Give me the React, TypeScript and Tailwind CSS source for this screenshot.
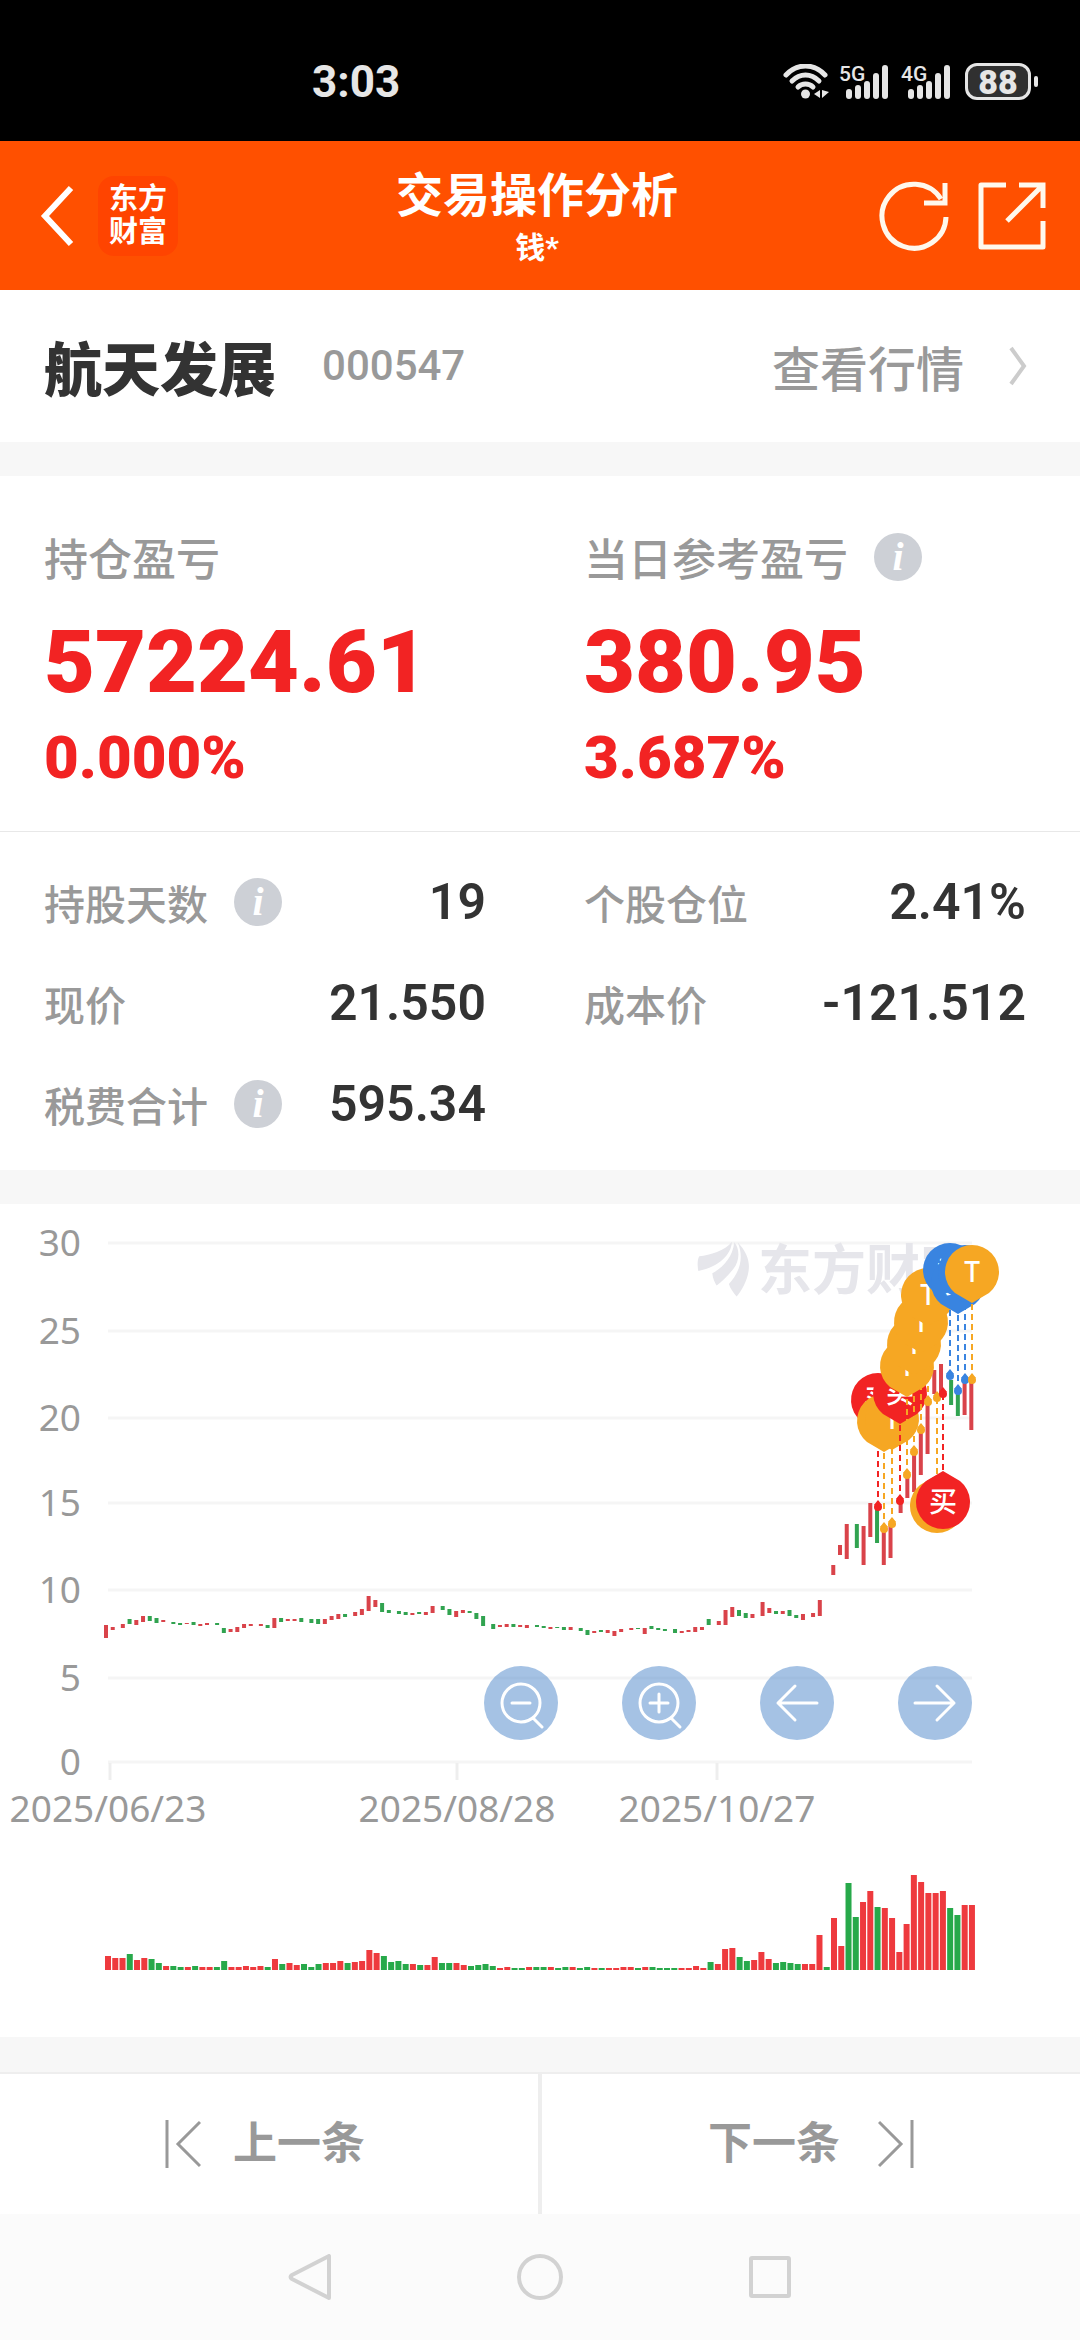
import React from "react";

const candleSpans: ([number, number] | null)[] = [
  [421, 434], [423, 426], [420, 424], [415, 420], [416, 421], [412, 418], [412, 417], [414, 419], [416, 418], [418, 420],
  [419, 421], [419, 420], [418, 421], [420, 422], [419, 421], [419, 421], [424, 429], [425, 428], [423, 428], [420, 424],
  [420, 422], [420, 422], [421, 424], [414, 424], [414, 418], [415, 417], [415, 417], [414, 418], [415, 419], [415, 420],
  [415, 420], [412, 416], [410, 415], [410, 413], [408, 412], [405, 411], [392, 407], [396, 403], [399, 408], [406, 409],
  [407, 410], [408, 411], [409, 411], [408, 410], [408, 411], [402, 409], [402, 406], [405, 411], [407, 413], [406, 409],
  [407, 409], [409, 415], [412, 422], [420, 425], [421, 423], [420, 423], [420, 423], [421, 423], [421, 424], [421, 423],
  [422, 424], [423, 425], [423, 424], [423, 426], [423, 426], [424, 427], [426, 431], [427, 429], [426, 428], [426, 429],
  [427, 432], [425, 428], [424, 426], [424, 425], [424, 430], [422, 425], [424, 426], [425, 427], [425, 429], [427, 429],
  [426, 428], [423, 428], [423, 426], [415, 421], [417, 421], [406, 421], [403, 413], [406, 412], [409, 414], [410, 414],
  [398, 412], [404, 409], [407, 410], [407, 410], [406, 412], [411, 414], [410, 416], [409, 413], [396, 412], null,
  [361, 371], [341, 351], [320, 355], [320, 344], [322, 361], [299, 333], [303, 339], [325, 361], [320, 354], [297, 309],
  [271, 294], [248, 288], [226, 271], [198, 250], [166, 190], [160, 192], [176, 201], [188, 212], [176, 211], [176, 226],
];

const candleColors =
  "rrrgrrggrg" + "grgrrggrrr" + "rrgrgrrggg" + "rrrgrrrrgg" + "ggrgrrggrr" + "ggggrrgrrg" +
  "grggrggrgr" + "rrrgrggggr" + "rrrgrrrggr" + "rrgrggrrrg" + "rrrgrrgrrr" + "rrrrrrggrr";

const volumes = [
  14, 12, 12, 16, 10, 12, 11, 7, 4, 4, 3, 3, 4, 3, 3, 3, 9, 3, 3, 4,
  3, 4, 3, 11, 6, 7, 5, 6, 3, 6, 7, 7, 9, 7, 8, 9, 20, 17, 14, 8,
  9, 6, 6, 5, 5, 13, 7, 7, 7, 5, 4, 5, 6, 4, 2, 3, 2, 2, 3, 3,
  3, 3, 2, 3, 3, 2, 3, 2, 2, 2, 2, 3, 3, 2, 3, 3, 2, 2, 2, 2,
  2, 4, 2, 8, 6, 21, 22, 13, 9, 10, 18, 11, 7, 8, 7, 6, 6, 6, 35, 3,
  52, 24, 87, 53, 68, 79, 63, 62, 52, 18, 46, 95, 88, 77, 77, 79, 62, 55, 65, 65,
];

const volumeColors =
  "rrrgrrggrg" + "grgrrggrrr" + "rrgrgrrggg" + "rrrgrrrrgg" + "ggrgrrggrr" + "ggggrrggrg" +
  "grggrggrgr" + "rrrgrggggr" + "rrrgrrrggr" + "rrggggrrrg" + "rrggrrgrrr" + "rrrrrrggrr";

const RED = "#f22323";
const ORANGE = "#f6a723";
const BLUE = "#3984e0";

interface Marker {
  x: number;
  pinY: number;
  dotY: number;
  color: string;
  label?: string;
}

// drawn in date order, later pins cover earlier ones
const markers: Marker[] = [
  { x: 878, pinY: 196, dotY: 303, color: RED, label: "买" },
  { x: 884, pinY: 217, dotY: 325, color: ORANGE },
  { x: 892, pinY: 215, dotY: 320, color: ORANGE, label: "T" },
  { x: 900, pinY: 189, dotY: 297, color: RED, label: "买" },
  { x: 907, pinY: 162, dotY: 271, color: ORANGE, label: "T" },
  { x: 914, pinY: 140, dotY: 248, color: ORANGE, label: "T" },
  { x: 921, pinY: 118, dotY: 226, color: ORANGE, label: "T" },
  { x: 928, pinY: 91, dotY: 198, color: ORANGE, label: "T" },
  { x: 937, pinY: 302, dotY: 194, color: ORANGE },
  { x: 943, pinY: 298, dotY: 190, color: RED, label: "买" },
  { x: 950, pinY: 66, dotY: 172, color: BLUE, label: "卖" },
  { x: 958, pinY: 79, dotY: 187, color: BLUE, label: "卖" },
  { x: 965, pinY: 68, dotY: 176, color: BLUE },
  { x: 972, pinY: 68, dotY: 176, color: ORANGE, label: "T" },
];

const gridLines = [
  { value: 30, y: 39 },
  { value: 25, y: 127 },
  { value: 20, y: 214 },
  { value: 15, y: 299 },
  { value: 10, y: 386 },
  { value: 5, y: 474 },
  { value: 0, y: 558 },
];

const dates = [
  { label: "2025/06/23", x: 108 },
  { label: "2025/08/28", x: 457 },
  { label: "2025/10/27", x: 717 },
];

interface SignalProps {
  network: string;
}

function Signal({ network }: SignalProps) {
  return (
    <svg className="h-[34px] w-[54px] overflow-visible" viewBox="0 0 50 34" fill="currentColor">
      <text x="0" y="16" fontSize="21" fontWeight="500">{network}</text>
      <rect x="7" y="24" width="6" height="10" rx="3" />
      <rect x="16" y="20" width="6" height="14" rx="3" />
      <rect x="25" y="16" width="6" height="18" rx="3" />
      <rect x="34" y="8" width="6" height="26" rx="3" />
      <rect x="43" y="0" width="6" height="34" rx="3" />
    </svg>
  );
}

function StatusBar() {
  return (
    <div className="flex h-[141px] items-center justify-between bg-black pt-[22px] pr-[42px] pl-[312px] text-[#e6e6e6]">
      <span className="text-[44px] leading-none font-bold">3:03</span>
      <div className="flex items-center gap-2">
        <svg className="h-9 w-[46px]" viewBox="0 0 46 36" fill="none" stroke="currentColor" strokeWidth="5" strokeLinecap="round">
          <path d="M3 11 C14 -1 31 -1 42 11" />
          <path d="M9 17 C17 9 28 9 36 17" />
          <path d="M15 23 C19 19 26 19 30 23" />
          <circle cx="22.5" cy="30" r="4.5" fill="currentColor" stroke="none" />
          <path d="M37 26v8l-6-4zM39 26v8l7-6z" fill="currentColor" stroke="none" />
        </svg>
        <Signal network="5G" />
        <Signal network="4G" />
        <div className="ml-1 flex items-center gap-[3px]">
          <div className="flex h-[37px] w-[66px] items-center justify-center rounded-xl border-3 border-[#e6e6e6] bg-[#303030] text-[34px] leading-none font-black">
            88
          </div>
          <div className="h-[11px] w-1 rounded-full bg-[#e6e6e6]" />
        </div>
      </div>
    </div>
  );
}

function Header() {
  return (
    <header className="grid h-[149px] grid-cols-[1fr_auto_1fr] items-center bg-[#ff5000] pr-[34px] pl-7 text-white">
      <div className="flex items-center gap-6">
        <button aria-label="返回" className="py-4 pl-2.5">
          <svg className="h-16 w-9" viewBox="0 0 36 64" fill="none" stroke="currentColor" strokeWidth="6">
            <path d="M33 4 L7 32 L33 60" />
          </svg>
        </button>
        <div className="flex size-20 flex-col items-center justify-center rounded-2xl bg-[#ff4400] text-[29px] leading-[33px] font-bold">
          <span>东方</span>
          <span>财富</span>
        </div>
      </div>
      <div className="flex flex-col items-center gap-1 pt-1">
        <h1 className="text-[47px] leading-[56px] font-bold">交易操作分析</h1>
        <p className="text-[30px] leading-10 font-bold">钱*</p>
      </div>
      <div className="flex items-center justify-end gap-[29px]">
        <button aria-label="刷新">
          <svg className="size-[70px]" viewBox="0 0 70 70" fill="none" stroke="#fff8ec" strokeWidth="5">
            <path d="M67 36 A32 32 0 1 1 62 18" />
            <path d="M45 22 H66 V2" />
          </svg>
        </button>
        <button aria-label="分享">
          <svg className="size-[68px]" viewBox="0 0 68 68" fill="none" stroke="#fff8ec" strokeWidth="5">
            <path d="M28 3 H3 V65 H65 V39" strokeLinejoin="round" />
            <path d="M41 3 H65 V26 M64 4 L29 39" />
          </svg>
        </button>
      </div>
    </header>
  );
}

function InfoIcon() {
  return (
    <button
      aria-label="说明"
      className="flex size-12 items-center justify-center rounded-full bg-[#cdd0d6] font-['Liberation_Serif',serif] text-[40px] leading-none font-bold text-white italic"
    >
      i
    </button>
  );
}

interface ProfitProps {
  label: string;
  value: string;
  percent: string;
  info?: boolean;
}

function Profit({ label, value, percent, info }: ProfitProps) {
  return (
    <div>
      <div className="flex h-12 items-center gap-[26px] font-['Noto_Sans_CJK_SC',sans-serif] text-[44px] leading-none font-medium text-[#999]">
        {label}
        {info && <InfoIcon />}
      </div>
      <p className="mt-[37px] text-[88px] leading-[88px] font-black text-[#f22323]">{value}</p>
      <p className="mt-[22px] text-[60px] leading-[60px] font-black text-[#f22323]">{percent}</p>
    </div>
  );
}

interface StatProps {
  label: string;
  value: string;
  info?: boolean;
}

function Stat({ label, value, info }: StatProps) {
  return (
    <div className="flex h-12 items-center justify-between">
      <dt className="flex items-center gap-[26px] font-['Noto_Sans_CJK_SC',sans-serif] text-[41px] leading-none font-medium text-[#999]">
        {label}
        {info && <InfoIcon />}
      </dt>
      <dd className="text-[50px] leading-none font-semibold text-[#333]">{value}</dd>
    </div>
  );
}

function MarkerPin({ x, pinY, dotY, color, label }: Marker) {
  const below = pinY > dotY;
  return (
    <g>
      <line x1={x} y1={dotY} x2={x} y2={pinY} stroke={color} strokeWidth="2" strokeDasharray="6 4" />
      <g transform={`translate(${x} ${pinY}) scale(1 ${below ? -1 : 1})`}>
        <path d="M-17 21 A27 27 0 1 1 17 21 L0 31 Z" fill={color} />
      </g>
      <path d={`M${x} ${dotY - 7} L${x + 4} ${dotY - 2} H${x - 4} Z`} fill={color} />
      <circle cx={x} cy={dotY} r="4" fill={color} />
      {label && (
        <text x={x} y={pinY + 10} textAnchor="middle" fontSize="28" fontWeight="500" fill="#fff">
          {label}
        </text>
      )}
    </g>
  );
}

function PriceChart() {
  return (
    <svg
      className="block w-full font-['Noto_Sans','Noto_Sans_CJK_SC',sans-serif]"
      viewBox="0 0 1080 833"
      role="img"
      aria-label="股价走势"
    >
      {/* Grid and axes */}
      {gridLines.map(({ value, y }) => (
        <g key={value}>
          <line x1="108" x2="972" y1={y} y2={y} stroke="#f5f5f5" strokeWidth="3" />
          <text x="81" y={y + 13} textAnchor="end" fontSize="37" fill="#999">
            {value}
          </text>
        </g>
      ))}
      {dates.map(({ label, x }) => (
        <g key={label}>
          <line x1={Math.max(x, 110)} x2={Math.max(x, 110)} y1="559" y2="576" stroke="#eee" strokeWidth="3" />
          <text x={x} y="618" textAnchor="middle" fontSize="37" fill="#999">
            {label}
          </text>
        </g>
      ))}

      {/* Watermark */}
      <g fill="#e6e6eb">
        <g transform="translate(690 25) scale(0.333)">
          <path d="M25 126 C22 108 22 92 28 82 C60 78 105 65 126 38 C124 75 90 112 25 126Z" />
          <path d="M133 40 C150 60 150 95 130 120 C115 140 95 158 80 170 C74 160 68 148 67 133 C100 115 128 85 133 40Z" />
          <path d="M143 40 C172 70 180 100 176 125 C172 155 155 185 140 203 C130 190 120 178 117 165 C145 135 165 90 143 40Z" />
        </g>
        <text x="758" y="86" fontSize="54" fontWeight="700">东方财富</text>
      </g>

      {/* Candles sit on a 3.37px grid, so the gap between two days is not constant */}
      {candleSpans.map((span, i) =>
        span ? (
          <rect
            key={i}
            x={104 + 3.367 * Math.round(i * 2.159 + 0.2)}
            y={span[0]}
            width="4"
            height={span[1] - span[0]}
            fill={candleColors[i] === "r" ? "#d9434a" : "#31a350"}
          />
        ) : null
      )}

      {markers.map((marker) => (
        <MarkerPin key={`${marker.x}-${marker.pinY}`} {...marker} />
      ))}

      {/* Volume */}
      {volumes.map((volume, i) => (
        <rect
          key={i}
          x={105 + i * 7.26}
          y={766 - volume}
          width="6"
          height={volume}
          fill={volumeColors[i] === "r" ? "#ee3a3e" : "#27a94a"}
        />
      ))}
    </svg>
  );
}

const chartControls = [
  { label: "缩小", path: "M18 37 a19 19 0 1 0 38 0 a19 19 0 1 0 -38 0 M28 37 H46 M49 52 L58 61" },
  { label: "放大", path: "M18 37 a19 19 0 1 0 38 0 a19 19 0 1 0 -38 0 M28 37 H46 M37 28 V46 M49 52 L58 61" },
  { label: "左移", path: "M57 37 H18 M35 20 L18 37 L35 54" },
  { label: "右移", path: "M17 37 H56 M39 20 L56 37 L39 54" },
];

function ChartControls() {
  return (
    <div className="absolute top-[55.5%] right-[10%] flex gap-16">
      {chartControls.map(({ label, path }) => (
        <button key={label} aria-label={label} className="rounded-full bg-[#4b85c9]/50">
          <svg className="size-[74px]" viewBox="0 0 74 74" fill="none" stroke="#fff" strokeWidth="3" strokeLinecap="round" strokeLinejoin="round">
            <path d={path} />
          </svg>
        </button>
      ))}
    </div>
  );
}

function SystemNav() {
  return (
    <nav className="flex h-[126px] items-center justify-center gap-[184px] bg-[#fbfbfb]">
      <button aria-label="返回">
        <svg className="size-[46px]" viewBox="0 0 46 46" fill="none" stroke="#d2d2d2" strokeWidth="4" strokeLinejoin="round">
          <path d="M42 2 V44 L5 25 Q2 23 5 21 Z" />
        </svg>
      </button>
      <button aria-label="主屏幕">
        <svg className="size-[46px]" viewBox="0 0 46 46" fill="none" stroke="#d2d2d2" strokeWidth="4">
          <circle cx="23" cy="23" r="21" />
        </svg>
      </button>
      <button aria-label="最近任务">
        <svg className="size-[46px]" viewBox="0 0 46 46" fill="none" stroke="#d2d2d2" strokeWidth="4">
          <rect x="4" y="4" width="38" height="38" rx="1" />
        </svg>
      </button>
    </nav>
  );
}

export default function App() {
  return (
    <div className="flex min-h-screen flex-col bg-[#f7f7f7] font-['Roboto','Noto_Sans_CJK_SC',sans-serif]">
      <StatusBar />
      <Header />

      <main className="flex flex-1 flex-col gap-[34px]">
        {/* Stock */}
        <section className="flex h-[152px] items-center justify-between bg-white pr-[50px] pl-11 font-['Noto_Sans_CJK_SC',sans-serif]">
          <div className="flex items-center gap-[46px]">
            <h2 className="text-[58px] leading-none font-black text-[#333]">航天发展</h2>
            <span className="font-['Roboto',sans-serif] text-[42px] leading-none font-medium text-[#999]">000547</span>
          </div>
          <a href="#quote" className="flex items-center gap-[42px] text-[48px] leading-none font-medium text-[#999]">
            查看行情
            <svg className="h-10 w-6" viewBox="0 0 24 40" fill="none" stroke="#ccc" strokeWidth="4">
              <path d="M5 2 L18 20 L5 38" />
            </svg>
          </a>
        </section>

        {/* Profit and position */}
        <section className="bg-white">
          <div className="grid grid-cols-2 gap-x-[98px] border-b border-[#e8e8e8] pt-[57px] pr-[54px] pb-[43px] pl-11">
            <Profit label="持仓盈亏" value="57224.61" percent="0.000%" />
            <Profit label="当日参考盈亏" value="380.95" percent="3.687%" info />
          </div>
          <dl className="grid grid-cols-2 gap-x-[98px] gap-y-[53px] pt-[46px] pr-[54px] pb-[42px] pl-11">
            <Stat label="持股天数" value="19" info />
            <Stat label="个股仓位" value="2.41%" />
            <Stat label="现价" value="21.550" />
            <Stat label="成本价" value="-121.512" />
            <Stat label="税费合计" value="595.34" info />
          </dl>
        </section>

        <section className="relative bg-white">
          <PriceChart />
          <ChartControls />
        </section>
      </main>

      {/* Previous / next */}
      <div className="grid h-[142px] grid-cols-2 border-t-2 border-[#eee] bg-white text-[44px] leading-none font-bold text-[#999]">
        <button className="flex items-center justify-center gap-8 border-r-2 border-[#eee] pr-2">
          <svg className="h-12 w-9" viewBox="0 0 36 48" fill="none" stroke="currentColor" strokeWidth="3">
            <path d="M2 0 V48 M35 2 L13 24 L35 46" />
          </svg>
          上一条
        </button>
        <button className="flex items-center justify-center gap-[38px] border-l-2 border-[#eee]">
          下一条
          <svg className="h-12 w-9" viewBox="0 0 36 48" fill="none" stroke="currentColor" strokeWidth="3">
            <path d="M34 0 V48 M1 2 L23 24 L1 46" />
          </svg>
        </button>
      </div>
      <SystemNav />
    </div>
  );
}
